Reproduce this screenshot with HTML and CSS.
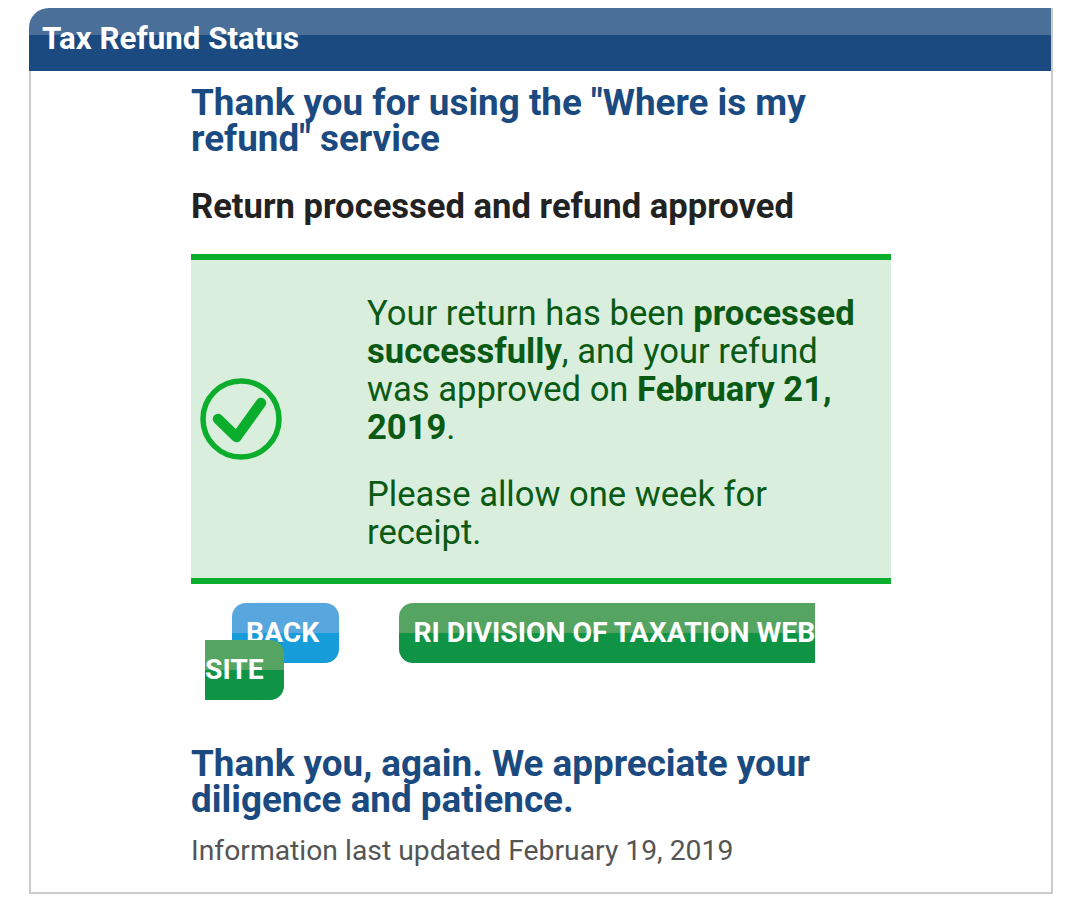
FILE: index.html
```html
<!DOCTYPE html>
<html lang="en">
<head>
<meta charset="utf-8">
<title>Tax Refund Status</title>
<link rel="stylesheet" href="styles.css">
</head>
<body>
<main class="panel">
  <header class="panel-head">Tax Refund Status</header>
  <section class="content">
    <h2 class="heading">Thank you for using the "Where is my refund" service</h2>
    <h3 class="subheading">Return processed and refund approved</h3>
    <div class="alert">
      <div class="alert-icon">
        <svg width="82" height="82" viewBox="0 0 82 82" aria-hidden="true">
          <circle cx="41" cy="41" r="38" fill="none" stroke="#0bae2c" stroke-width="5.5"/>
          <path d="M18 41 L36.500 59 L61 25" fill="none" stroke="#0bae2c" stroke-width="10.5" stroke-linecap="round" stroke-linejoin="round"/>
        </svg>
      </div>
      <div class="alert-text">
        <p>Your return has been <b>processed successfully</b>, and your refund was approved on <b>February 21, 2019</b>.</p>
        <p>Please allow one week for receipt.</p>
      </div>
    </div>
    <div class="actions">
      <a class="btn btn-blue" href="#">BACK</a>
      <a class="btn btn-green" href="#">RI DIVISION OF TAXATION WEB SITE</a>
    </div>
    <h2 class="heading thanks">Thank you, again. We appreciate your diligence and patience.</h2>
    <p class="updated">Information last updated February 19, 2019</p>
  </section>
</main>
</body>
</html>
```

FILE: styles.css
```css
html, body {
  margin: 0;
  padding: 0;
  background: #fff;
}
body {
  padding: 8px 27px 0 29px;
  height: 899px;
  box-sizing: border-box;
  overflow: hidden;
  font-family: Roboto, "Liberation Sans", sans-serif;
}
.panel {
  height: 886px;
  box-sizing: border-box;
  border: 2px solid #cbcbcb;
  border-top: 0;
  border-top-left-radius: 20px;
}
.panel-head {
  margin-left: -2px;
  height: 63px;
  box-sizing: border-box;
  padding: 13px 13px 0;
  border-top-left-radius: 20px;
  background: linear-gradient(to bottom, #4a7099 0, #4a7099 27px, #1a4a7f 27px, #1a4a7f 100%);
  color: #fff;
  font-size: 31.3px;
  font-weight: 700;
  line-height: 36px;
}
.content {
  width: 700px;
  margin-left: 160px;
}
.heading {
  margin: 0;
  padding-top: 14px;
  color: #1a4a7f;
  font-size: 36.8px;
  font-weight: 700;
  line-height: 36px;
}
.subheading {
  margin: 30px 0 0;
  color: #222;
  font-size: 34.6px;
  font-weight: 700;
  line-height: 38px;
}
.alert {
  display: flex;
  align-items: center;
  box-sizing: border-box;
  margin-top: 29px;
  border-top: 6px solid #0bae2c;
  border-bottom: 6px solid #0bae2c;
  background: #d9eedd;
}
.alert-icon {
  display: flex;
  flex: 0 0 176px;
  padding-left: 9px;
  box-sizing: border-box;
}
.alert-text {
  flex: 1;
  padding: 34px 30px 27px 0;
  color: #0a5a14;
  font-size: 34.6px;
  line-height: 38px;
}
.alert-text p {
  margin: 0;
}
.alert-text p + p {
  margin-top: 29px;
}
.actions {
  margin-top: 29px;
  padding-left: 14px;
  font-size: 28.3px;
  font-weight: 700;
  line-height: 37px;
}
.btn {
  padding: 12.5px 20px 14.5px 14px;
  border-radius: 14px;
  color: #fff;
  text-decoration: none;
  -webkit-box-decoration-break: slice;
  box-decoration-break: slice;
}
.btn-blue {
  margin-left: 27px;
  margin-right: 53px;
  background: linear-gradient(to bottom, #58a6de 0, #58a6de 50%, #169cd8 50%, #169cd8 100%);
}
.btn-green {
  background: linear-gradient(to bottom, #55a461 0, #55a461 50%, #0f9446 50%, #0f9446 100%);
}
.thanks {
  margin-top: 45px;
}
.updated {
  margin: 15px 0 0;
  color: #555;
  font-size: 28.3px;
  line-height: 36px;
}
```
